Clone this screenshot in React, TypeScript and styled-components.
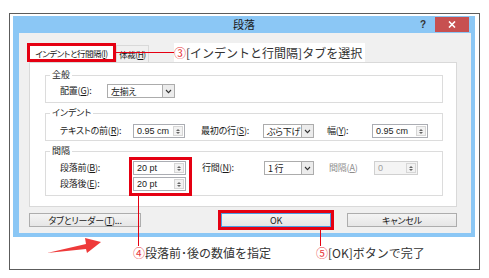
import styled, { createGlobalStyle, css } from 'styled-components';

const RED = '#e50012';

const GlobalStyle = createGlobalStyle`
  html, body {
    margin: 0;
    padding: 0;
    background: #fff;
  }
  body {
    font-family: "Noto Sans CJK JP", "Noto Sans", sans-serif;
    color: #1a1a1a;
  }
`;

const Page = styled.div`
  width: 489px;
  height: 278px;
  box-sizing: border-box;
  padding: 13px 0 0 9px;
  overflow: hidden;
`;

const Frame = styled.div`
  width: 471px;
  height: 257px;
  box-sizing: border-box;
  border: 1px solid #5c5c5c;
  padding: 2px 4px 0 3px;
  display: flex;
  flex-direction: column;
`;

// dialog window
const Window = styled.div`
  height: 221px;
  flex-shrink: 0;
  background: #8bc7f5;
  display: flex;
  flex-direction: column;
`;

const TitleBar = styled.div`
  height: 17px;
  display: grid;
  grid-template-columns: 1fr auto 1fr;
  align-items: center;
`;

const Title = styled.div`
  font-size: 11px;
  line-height: 17px;
  color: #1a1a1a;
`;

const TitleTools = styled.div`
  height: 100%;
  display: flex;
  justify-content: flex-end;
  align-items: flex-start;
  padding-right: 6px;
`;

const Help = styled.span`
  font: bold 10px "Liberation Sans", sans-serif;
  line-height: 10px;
  color: #333;
  margin: 4px 9px 0 0;
`;

const CloseButton = styled.div`
  width: 34px;
  height: 15px;
  margin-top: 1px;
  background: #c75050;
  display: flex;
  align-items: center;
  justify-content: center;
`;

const Body = styled.div`
  flex: 1;
  margin: 0 4px 4px 6px;
  background: #f0f0f0;
  padding: 10px 14px 6px 10px;
  display: flex;
  flex-direction: column;
`;

// tabs
const TabRow = styled.div`
  position: relative;
  height: 19px;
  margin-left: -2px;
  display: flex;
  align-items: flex-end;
`;

const Tab = styled.div<{ $w: number; $active?: boolean }>`
  box-sizing: border-box;
  width: ${(p) => p.$w}px;
  font-size: 8.5px;
  font-feature-settings: "palt";
  letter-spacing: -0.5px;
  white-space: nowrap;
  overflow: hidden;
  display: flex;
  align-items: center;
  justify-content: center;
  ${(p) =>
    p.$active
      ? css`
          height: 19px;
          border: 3px solid ${RED};
          background: #fff;
        `
      : css`
          height: 17px;
          border: 1px solid #d9d9d9;
          border-bottom: none;
          background: #f0f0f0;
        `}
`;

const Callout = styled.div`
  position: absolute;
  left: 89px;
  top: 0;
  height: 19px;
  display: flex;
  align-items: center;
  z-index: 1;
`;

const CalloutLine = styled.div`
  width: 58px;
  height: 1px;
  background: ${RED};
`;

const CalloutText = styled.div`
  font-size: 12px;
  line-height: 19px;
  color: #333;
  background: #fff;
  padding-right: 3px;
  white-space: nowrap;
`;

const Num = styled.span`
  color: #e8383d;
`;

const Key = styled.span`
  text-decoration: underline;
  text-underline-offset: 1px;
`;

// panel and groups
const Panel = styled.div`
  height: 145px;
  box-sizing: border-box;
  border: 1px solid #d9d9d9;
  background: #fff;
  padding: 6px 13px 0 15px;
  display: flex;
  flex-direction: column;
  gap: 4px;
`;

const Group = styled.fieldset<{ $pb: number }>`
  margin: 0;
  min-width: 0;
  border: 1px solid #dcdcdc;
  padding: 0 0 ${(p) => p.$pb}px 4px;
`;

const Legend = styled.legend`
  padding: 0 2px;
  font-size: 9px;
  line-height: 12px;
  font-feature-settings: "palt";
`;

const Row = styled.div<{ $mt: number }>`
  margin-top: ${(p) => p.$mt}px;
  padding-left: 10px;
  display: flex;
  align-items: flex-start;
`;

const Column = styled.div`
  display: flex;
  flex-direction: column;
  gap: 2px;
`;

const Label = styled.div<{ $w: number; $disabled?: boolean }>`
  width: ${(p) => p.$w}px;
  height: 14px;
  line-height: 14px;
  font-size: 9px;
  font-feature-settings: "palt";
  letter-spacing: -0.2px;
  white-space: nowrap;
  color: ${(p) => (p.$disabled ? '#8d8d8d' : '#1a1a1a')};
`;

const Gap = styled.div<{ $w: number }>`
  width: ${(p) => p.$w}px;
  flex-shrink: 0;
`;

// inputs
const SpinBox = styled.div<{ $w: number; $disabled?: boolean }>`
  box-sizing: border-box;
  width: ${(p) => p.$w}px;
  height: 14px;
  border: 1px solid ${(p) => (p.$disabled ? '#d0d0d0' : '#abadb3')};
  background: ${(p) => (p.$disabled ? '#f4f4f4' : '#fff')};
  color: ${(p) => (p.$disabled ? '#a0a0a0' : '#1a1a1a')};
  padding: 0 1px 0 3px;
  display: flex;
  align-items: center;
  justify-content: space-between;
  font: 9px "Liberation Sans", sans-serif;
`;

const SpinButton = styled.div`
  box-sizing: border-box;
  width: 10px;
  height: 10px;
  border: 1px solid #d6d6d6;
  background: #f2f2f2;
  display: flex;
  flex-direction: column;
  align-items: center;
  justify-content: center;
  gap: 1px;
`;

const Tri = styled.span<{ $down?: boolean }>`
  width: 0;
  height: 0;
  border-left: 2.5px solid transparent;
  border-right: 2.5px solid transparent;
  ${(p) => (p.$down ? 'border-top: 2.5px solid #666;' : 'border-bottom: 2.5px solid #666;')}
`;

const SelectBox = styled.div<{ $w: number }>`
  box-sizing: border-box;
  width: ${(p) => p.$w}px;
  height: 14px;
  border: 1px solid #acacac;
  background: #fff;
  padding-left: 3px;
  display: flex;
  align-items: center;
  justify-content: space-between;
  font-size: 9px;
  font-feature-settings: "palt";
  letter-spacing: -0.3px;
  white-space: nowrap;
  overflow: hidden;
`;

const SelectButton = styled.div`
  box-sizing: border-box;
  flex-shrink: 0;
  width: 12px;
  height: 12px;
  border-left: 1px solid #acacac;
  background: #ececec;
  display: flex;
  align-items: center;
  justify-content: center;
`;

// red highlight boxes with a line down to their note
const Highlight = styled.div<{ $lineX: number; $lineH: number }>`
  position: relative;
  border: 3px solid ${RED};
  &::after {
    content: '';
    position: absolute;
    left: ${(p) => p.$lineX}px;
    top: calc(100% + 3px);
    width: 1px;
    height: ${(p) => p.$lineH}px;
    background: ${RED};
  }
`;

const SpinHighlight = styled(Highlight)`
  padding: 1px 3px 2px 1px;
  margin: -4px -6px -5px -4px;
  display: flex;
  flex-direction: column;
  gap: 2px;
`;

const OkHighlight = styled(Highlight)`
  margin: -3px;
  margin-left: auto;
  display: flex;
`;

// buttons
const ButtonRow = styled.div`
  margin-top: 6px;
  height: 14px;
  display: flex;
  gap: 16px;
`;

const Button = styled.div<{ $w: number; $primary?: boolean }>`
  box-sizing: border-box;
  width: ${(p) => p.$w}px;
  height: 14px;
  border: 1px solid ${(p) => (p.$primary ? '#4c9be3' : '#adadad')};
  background: linear-gradient(#f4f4f4, #e6e6e6);
  font-size: 9px;
  font-feature-settings: "palt";
  letter-spacing: -0.2px;
  display: flex;
  align-items: center;
  justify-content: center;
  white-space: nowrap;
`;

const LeftButton = styled(Button)`
  margin-right: auto;
`;

// notes under the window
const Notes = styled.div`
  flex: 1;
  display: grid;
  grid-template-columns: 31px 60px 29px 183px auto;
  align-items: start;
`;

const Note = styled.div`
  padding-top: 8px;
  font-size: 12px;
  line-height: 16px;
  color: #333;
  white-space: nowrap;
`;

function Spinner({ w, value, disabled }: { w: number; value: string; disabled?: boolean }) {
  return (
    <SpinBox $w={w} $disabled={disabled}>
      <span>{value}</span>
      <SpinButton>
        <Tri />
        <Tri $down />
      </SpinButton>
    </SpinBox>
  );
}

function Dropdown({ w, value }: { w: number; value: string }) {
  return (
    <SelectBox $w={w}>
      <span>{value}</span>
      <SelectButton>
        <svg width="7" height="5" viewBox="0 0 7 5">
          <polyline points="1,1 3.5,3.6 6,1" fill="none" stroke="#333" strokeWidth="1.1" />
        </svg>
      </SelectButton>
    </SelectBox>
  );
}

export default function App() {
  return (
    <>
      <GlobalStyle />
      <Page>
        <Frame>
          <Window>
            <TitleBar>
              <span />
              <Title>段落</Title>
              <TitleTools>
                <Help>?</Help>
                <CloseButton>
                  <svg width="8" height="7" viewBox="0 0 8 7">
                    <path d="M1 0.5 L7 6.5 M7 0.5 L1 6.5" stroke="#fff" strokeWidth="1.6" />
                  </svg>
                </CloseButton>
              </TitleTools>
            </TitleBar>
            <Body>
              <TabRow>
                <Tab $w={89} $active>
                  インデントと行間隔(<Key>I</Key>)
                </Tab>
                <Tab $w={33}>
                  体裁(<Key>H</Key>)
                </Tab>
                <Callout>
                  <CalloutLine />
                  <CalloutText>
                    <Num>③</Num>[インデントと行間隔]タブを選択
                  </CalloutText>
                </Callout>
              </TabRow>
              <Panel>
                <Group $pb={4}>
                  <Legend>全般</Legend>
                  <Row $mt={3}>
                    <Label $w={47}>
                      配置(<Key>G</Key>):
                    </Label>
                    <Dropdown w={68} value="左揃え" />
                  </Row>
                </Group>
                <Group $pb={2}>
                  <Legend>インデント</Legend>
                  <Row $mt={5}>
                    <Label $w={73}>
                      テキストの前(<Key>R</Key>):
                    </Label>
                    <Spinner w={52} value="0.95 cm" />
                    <Gap $w={16} />
                    <Label $w={62}>
                      最初の行(<Key>S</Key>):
                    </Label>
                    <Dropdown w={51} value="ぶら下げ" />
                    <Gap $w={13} />
                    <Label $w={45}>
                      幅(<Key>Y</Key>):
                    </Label>
                    <Spinner w={56} value="0.95 cm" />
                  </Row>
                </Group>
                <Group $pb={4}>
                  <Legend>間隔</Legend>
                  <Row $mt={4}>
                    <Column>
                      <Label $w={73}>
                        段落前(<Key>B</Key>):
                      </Label>
                      <Label $w={73}>
                        段落後(<Key>E</Key>):
                      </Label>
                    </Column>
                    <SpinHighlight $lineX={6} $lineH={50}>
                      <Spinner w={53} value="20 pt" />
                      <Spinner w={53} value="20 pt" />
                    </SpinHighlight>
                    <Gap $w={16} />
                    <Label $w={62}>
                      行間(<Key>N</Key>):
                    </Label>
                    <Dropdown w={50} value="1 行" />
                    <Gap $w={15} />
                    <Label $w={45} $disabled>
                      間隔(<Key>A</Key>)
                    </Label>
                    <Spinner w={44} value="0" disabled />
                  </Row>
                </Group>
              </Panel>
              <ButtonRow>
                <LeftButton $w={112}>
                  タブとリーダー(<Key>T</Key>)...
                </LeftButton>
                <OkHighlight $lineX={99} $lineH={16}>
                  <Button $w={110} $primary>
                    OK
                  </Button>
                </OkHighlight>
                <Button $w={110}>キャンセル</Button>
              </ButtonRow>
            </Body>
          </Window>
          <Notes>
            <span />
            <svg width="60" height="22" viewBox="0 0 60 22">
              <polygon points="3,16 42,7 41,1 57,5 43,16 42,12" fill="#ee3a3a" />
            </svg>
            <span />
            <Note>
              <Num>④</Num>段落前･後の数値を指定
            </Note>
            <Note>
              <Num>⑤</Num>[OK]ボタンで完了
            </Note>
          </Notes>
        </Frame>
      </Page>
    </>
  );
}
